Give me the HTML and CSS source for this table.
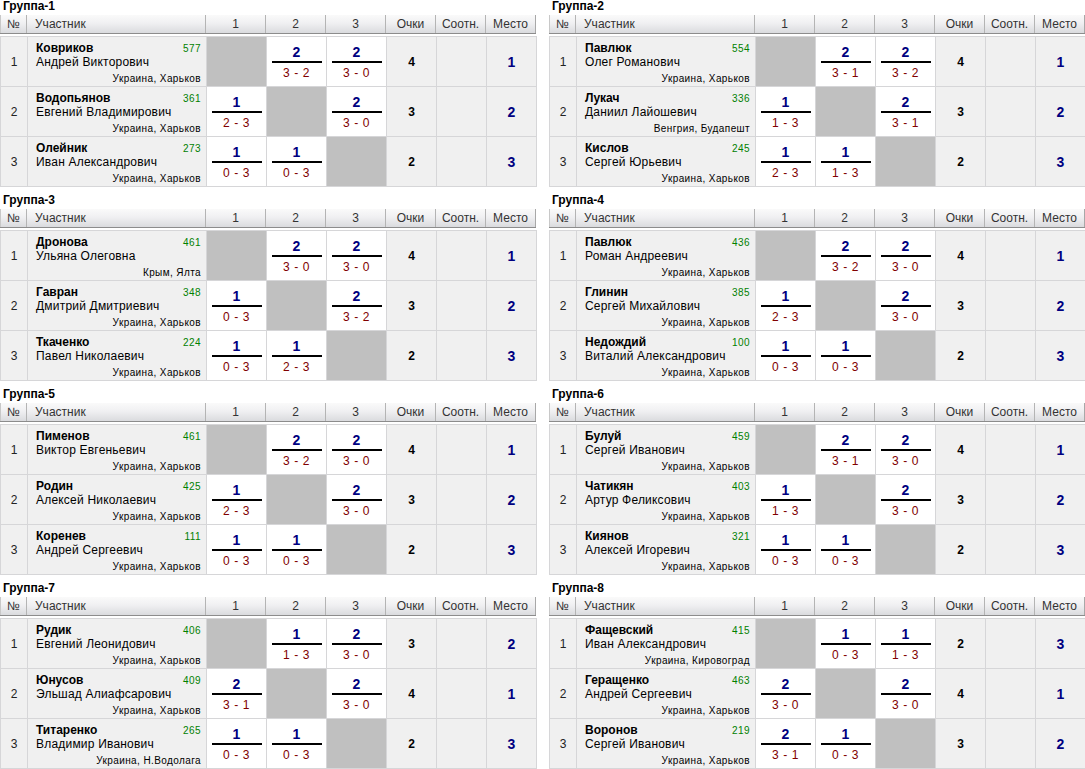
FILE: index.html
```html
<!DOCTYPE html>
<html lang="ru">
<head>
<meta charset="utf-8">
<title>Группы</title>
<link rel="stylesheet" href="styles.css">
</head>
<body>
<div class="page">

<section class="group">
<div class="gtitle">Группа-1</div>
<div class="hd"><div class="c-num">№</div><div class="c-pl">Участник</div><div>1</div><div>2</div><div>3</div><div>Очки</div><div>Соотн.</div><div class="last">Место</div></div>
<table class="bd"><colgroup><col class="w-num"><col class="w-pl"><col class="w-sc"><col class="w-sc"><col class="w-sc"><col class="w-pt"><col class="w-pt"><col class="w-ps"></colgroup>
<tr><td class="num">1</td><td class="pl"><div class="top"><b>Ковриков</b><span class="rt">577</span></div><div class="fn">Андрей Викторович</div><div class="loc">Украина, Харьков</div></td><td class="x"></td><td class="sc"><div class="w">2</div><div class="ln"></div><div class="s">3 - 2</div></td><td class="sc"><div class="w">2</div><div class="ln"></div><div class="s">3 - 0</div></td><td class="pts">4</td><td class="rat"></td><td class="pos">1</td></tr>
<tr><td class="num">2</td><td class="pl"><div class="top"><b>Водопьянов</b><span class="rt">361</span></div><div class="fn">Евгений Владимирович</div><div class="loc">Украина, Харьков</div></td><td class="sc"><div class="w">1</div><div class="ln"></div><div class="s">2 - 3</div></td><td class="x"></td><td class="sc"><div class="w">2</div><div class="ln"></div><div class="s">3 - 0</div></td><td class="pts">3</td><td class="rat"></td><td class="pos">2</td></tr>
<tr><td class="num">3</td><td class="pl"><div class="top"><b>Олейник</b><span class="rt">273</span></div><div class="fn">Иван Александрович</div><div class="loc">Украина, Харьков</div></td><td class="sc"><div class="w">1</div><div class="ln"></div><div class="s">0 - 3</div></td><td class="sc"><div class="w">1</div><div class="ln"></div><div class="s">0 - 3</div></td><td class="x"></td><td class="pts">2</td><td class="rat"></td><td class="pos">3</td></tr>
</table>
</section>

<section class="group">
<div class="gtitle">Группа-2</div>
<div class="hd"><div class="c-num">№</div><div class="c-pl">Участник</div><div>1</div><div>2</div><div>3</div><div>Очки</div><div>Соотн.</div><div class="last">Место</div></div>
<table class="bd"><colgroup><col class="w-num"><col class="w-pl"><col class="w-sc"><col class="w-sc"><col class="w-sc"><col class="w-pt"><col class="w-pt"><col class="w-ps"></colgroup>
<tr><td class="num">1</td><td class="pl"><div class="top"><b>Павлюк</b><span class="rt">554</span></div><div class="fn">Олег Романович</div><div class="loc">Украина, Харьков</div></td><td class="x"></td><td class="sc"><div class="w">2</div><div class="ln"></div><div class="s">3 - 1</div></td><td class="sc"><div class="w">2</div><div class="ln"></div><div class="s">3 - 2</div></td><td class="pts">4</td><td class="rat"></td><td class="pos">1</td></tr>
<tr><td class="num">2</td><td class="pl"><div class="top"><b>Лукач</b><span class="rt">336</span></div><div class="fn">Даниил Лайошевич</div><div class="loc">Венгрия, Будапешт</div></td><td class="sc"><div class="w">1</div><div class="ln"></div><div class="s">1 - 3</div></td><td class="x"></td><td class="sc"><div class="w">2</div><div class="ln"></div><div class="s">3 - 1</div></td><td class="pts">3</td><td class="rat"></td><td class="pos">2</td></tr>
<tr><td class="num">3</td><td class="pl"><div class="top"><b>Кислов</b><span class="rt">245</span></div><div class="fn">Сергей Юрьевич</div><div class="loc">Украина, Харьков</div></td><td class="sc"><div class="w">1</div><div class="ln"></div><div class="s">2 - 3</div></td><td class="sc"><div class="w">1</div><div class="ln"></div><div class="s">1 - 3</div></td><td class="x"></td><td class="pts">2</td><td class="rat"></td><td class="pos">3</td></tr>
</table>
</section>

<section class="group">
<div class="gtitle">Группа-3</div>
<div class="hd"><div class="c-num">№</div><div class="c-pl">Участник</div><div>1</div><div>2</div><div>3</div><div>Очки</div><div>Соотн.</div><div class="last">Место</div></div>
<table class="bd"><colgroup><col class="w-num"><col class="w-pl"><col class="w-sc"><col class="w-sc"><col class="w-sc"><col class="w-pt"><col class="w-pt"><col class="w-ps"></colgroup>
<tr><td class="num">1</td><td class="pl"><div class="top"><b>Дронова</b><span class="rt">461</span></div><div class="fn">Ульяна Олеговна</div><div class="loc">Крым, Ялта</div></td><td class="x"></td><td class="sc"><div class="w">2</div><div class="ln"></div><div class="s">3 - 0</div></td><td class="sc"><div class="w">2</div><div class="ln"></div><div class="s">3 - 0</div></td><td class="pts">4</td><td class="rat"></td><td class="pos">1</td></tr>
<tr><td class="num">2</td><td class="pl"><div class="top"><b>Гавран</b><span class="rt">348</span></div><div class="fn">Дмитрий Дмитриевич</div><div class="loc">Украина, Харьков</div></td><td class="sc"><div class="w">1</div><div class="ln"></div><div class="s">0 - 3</div></td><td class="x"></td><td class="sc"><div class="w">2</div><div class="ln"></div><div class="s">3 - 2</div></td><td class="pts">3</td><td class="rat"></td><td class="pos">2</td></tr>
<tr><td class="num">3</td><td class="pl"><div class="top"><b>Ткаченко</b><span class="rt">224</span></div><div class="fn">Павел Николаевич</div><div class="loc">Украина, Харьков</div></td><td class="sc"><div class="w">1</div><div class="ln"></div><div class="s">0 - 3</div></td><td class="sc"><div class="w">1</div><div class="ln"></div><div class="s">2 - 3</div></td><td class="x"></td><td class="pts">2</td><td class="rat"></td><td class="pos">3</td></tr>
</table>
</section>

<section class="group">
<div class="gtitle">Группа-4</div>
<div class="hd"><div class="c-num">№</div><div class="c-pl">Участник</div><div>1</div><div>2</div><div>3</div><div>Очки</div><div>Соотн.</div><div class="last">Место</div></div>
<table class="bd"><colgroup><col class="w-num"><col class="w-pl"><col class="w-sc"><col class="w-sc"><col class="w-sc"><col class="w-pt"><col class="w-pt"><col class="w-ps"></colgroup>
<tr><td class="num">1</td><td class="pl"><div class="top"><b>Павлюк</b><span class="rt">436</span></div><div class="fn">Роман Андреевич</div><div class="loc">Украина, Харьков</div></td><td class="x"></td><td class="sc"><div class="w">2</div><div class="ln"></div><div class="s">3 - 2</div></td><td class="sc"><div class="w">2</div><div class="ln"></div><div class="s">3 - 0</div></td><td class="pts">4</td><td class="rat"></td><td class="pos">1</td></tr>
<tr><td class="num">2</td><td class="pl"><div class="top"><b>Глинин</b><span class="rt">385</span></div><div class="fn">Сергей Михайлович</div><div class="loc">Украина, Харьков</div></td><td class="sc"><div class="w">1</div><div class="ln"></div><div class="s">2 - 3</div></td><td class="x"></td><td class="sc"><div class="w">2</div><div class="ln"></div><div class="s">3 - 0</div></td><td class="pts">3</td><td class="rat"></td><td class="pos">2</td></tr>
<tr><td class="num">3</td><td class="pl"><div class="top"><b>Недождий</b><span class="rt">100</span></div><div class="fn">Виталий Александрович</div><div class="loc">Украина, Харьков</div></td><td class="sc"><div class="w">1</div><div class="ln"></div><div class="s">0 - 3</div></td><td class="sc"><div class="w">1</div><div class="ln"></div><div class="s">0 - 3</div></td><td class="x"></td><td class="pts">2</td><td class="rat"></td><td class="pos">3</td></tr>
</table>
</section>

<section class="group">
<div class="gtitle">Группа-5</div>
<div class="hd"><div class="c-num">№</div><div class="c-pl">Участник</div><div>1</div><div>2</div><div>3</div><div>Очки</div><div>Соотн.</div><div class="last">Место</div></div>
<table class="bd"><colgroup><col class="w-num"><col class="w-pl"><col class="w-sc"><col class="w-sc"><col class="w-sc"><col class="w-pt"><col class="w-pt"><col class="w-ps"></colgroup>
<tr><td class="num">1</td><td class="pl"><div class="top"><b>Пименов</b><span class="rt">461</span></div><div class="fn">Виктор Евгеньевич</div><div class="loc">Украина, Харьков</div></td><td class="x"></td><td class="sc"><div class="w">2</div><div class="ln"></div><div class="s">3 - 2</div></td><td class="sc"><div class="w">2</div><div class="ln"></div><div class="s">3 - 0</div></td><td class="pts">4</td><td class="rat"></td><td class="pos">1</td></tr>
<tr><td class="num">2</td><td class="pl"><div class="top"><b>Родин</b><span class="rt">425</span></div><div class="fn">Алексей Николаевич</div><div class="loc">Украина, Харьков</div></td><td class="sc"><div class="w">1</div><div class="ln"></div><div class="s">2 - 3</div></td><td class="x"></td><td class="sc"><div class="w">2</div><div class="ln"></div><div class="s">3 - 0</div></td><td class="pts">3</td><td class="rat"></td><td class="pos">2</td></tr>
<tr><td class="num">3</td><td class="pl"><div class="top"><b>Коренев</b><span class="rt">111</span></div><div class="fn">Андрей Сергеевич</div><div class="loc">Украина, Харьков</div></td><td class="sc"><div class="w">1</div><div class="ln"></div><div class="s">0 - 3</div></td><td class="sc"><div class="w">1</div><div class="ln"></div><div class="s">0 - 3</div></td><td class="x"></td><td class="pts">2</td><td class="rat"></td><td class="pos">3</td></tr>
</table>
</section>

<section class="group">
<div class="gtitle">Группа-6</div>
<div class="hd"><div class="c-num">№</div><div class="c-pl">Участник</div><div>1</div><div>2</div><div>3</div><div>Очки</div><div>Соотн.</div><div class="last">Место</div></div>
<table class="bd"><colgroup><col class="w-num"><col class="w-pl"><col class="w-sc"><col class="w-sc"><col class="w-sc"><col class="w-pt"><col class="w-pt"><col class="w-ps"></colgroup>
<tr><td class="num">1</td><td class="pl"><div class="top"><b>Булуй</b><span class="rt">459</span></div><div class="fn">Сергей Иванович</div><div class="loc">Украина, Харьков</div></td><td class="x"></td><td class="sc"><div class="w">2</div><div class="ln"></div><div class="s">3 - 1</div></td><td class="sc"><div class="w">2</div><div class="ln"></div><div class="s">3 - 0</div></td><td class="pts">4</td><td class="rat"></td><td class="pos">1</td></tr>
<tr><td class="num">2</td><td class="pl"><div class="top"><b>Чатикян</b><span class="rt">403</span></div><div class="fn">Артур Феликсович</div><div class="loc">Украина, Харьков</div></td><td class="sc"><div class="w">1</div><div class="ln"></div><div class="s">1 - 3</div></td><td class="x"></td><td class="sc"><div class="w">2</div><div class="ln"></div><div class="s">3 - 0</div></td><td class="pts">3</td><td class="rat"></td><td class="pos">2</td></tr>
<tr><td class="num">3</td><td class="pl"><div class="top"><b>Киянов</b><span class="rt">321</span></div><div class="fn">Алексей Игоревич</div><div class="loc">Украина, Харьков</div></td><td class="sc"><div class="w">1</div><div class="ln"></div><div class="s">0 - 3</div></td><td class="sc"><div class="w">1</div><div class="ln"></div><div class="s">0 - 3</div></td><td class="x"></td><td class="pts">2</td><td class="rat"></td><td class="pos">3</td></tr>
</table>
</section>

<section class="group">
<div class="gtitle">Группа-7</div>
<div class="hd"><div class="c-num">№</div><div class="c-pl">Участник</div><div>1</div><div>2</div><div>3</div><div>Очки</div><div>Соотн.</div><div class="last">Место</div></div>
<table class="bd"><colgroup><col class="w-num"><col class="w-pl"><col class="w-sc"><col class="w-sc"><col class="w-sc"><col class="w-pt"><col class="w-pt"><col class="w-ps"></colgroup>
<tr><td class="num">1</td><td class="pl"><div class="top"><b>Рудик</b><span class="rt">406</span></div><div class="fn">Евгений Леонидович</div><div class="loc">Украина, Харьков</div></td><td class="x"></td><td class="sc"><div class="w">1</div><div class="ln"></div><div class="s">1 - 3</div></td><td class="sc"><div class="w">2</div><div class="ln"></div><div class="s">3 - 0</div></td><td class="pts">3</td><td class="rat"></td><td class="pos">2</td></tr>
<tr><td class="num">2</td><td class="pl"><div class="top"><b>Юнусов</b><span class="rt">409</span></div><div class="fn">Эльшад Алиафсарович</div><div class="loc">Украина, Харьков</div></td><td class="sc"><div class="w">2</div><div class="ln"></div><div class="s">3 - 1</div></td><td class="x"></td><td class="sc"><div class="w">2</div><div class="ln"></div><div class="s">3 - 0</div></td><td class="pts">4</td><td class="rat"></td><td class="pos">1</td></tr>
<tr><td class="num">3</td><td class="pl"><div class="top"><b>Титаренко</b><span class="rt">265</span></div><div class="fn">Владимир Иванович</div><div class="loc">Украина, Н.Водолага</div></td><td class="sc"><div class="w">1</div><div class="ln"></div><div class="s">0 - 3</div></td><td class="sc"><div class="w">1</div><div class="ln"></div><div class="s">0 - 3</div></td><td class="x"></td><td class="pts">2</td><td class="rat"></td><td class="pos">3</td></tr>
</table>
</section>

<section class="group">
<div class="gtitle">Группа-8</div>
<div class="hd"><div class="c-num">№</div><div class="c-pl">Участник</div><div>1</div><div>2</div><div>3</div><div>Очки</div><div>Соотн.</div><div class="last">Место</div></div>
<table class="bd"><colgroup><col class="w-num"><col class="w-pl"><col class="w-sc"><col class="w-sc"><col class="w-sc"><col class="w-pt"><col class="w-pt"><col class="w-ps"></colgroup>
<tr><td class="num">1</td><td class="pl"><div class="top"><b>Фащевский</b><span class="rt">415</span></div><div class="fn">Иван Александрович</div><div class="loc">Украина, Кировоград</div></td><td class="x"></td><td class="sc"><div class="w">1</div><div class="ln"></div><div class="s">0 - 3</div></td><td class="sc"><div class="w">1</div><div class="ln"></div><div class="s">1 - 3</div></td><td class="pts">2</td><td class="rat"></td><td class="pos">3</td></tr>
<tr><td class="num">2</td><td class="pl"><div class="top"><b>Геращенко</b><span class="rt">463</span></div><div class="fn">Андрей Сергеевич</div><div class="loc">Украина, Харьков</div></td><td class="sc"><div class="w">2</div><div class="ln"></div><div class="s">3 - 0</div></td><td class="x"></td><td class="sc"><div class="w">2</div><div class="ln"></div><div class="s">3 - 0</div></td><td class="pts">4</td><td class="rat"></td><td class="pos">1</td></tr>
<tr><td class="num">3</td><td class="pl"><div class="top"><b>Воронов</b><span class="rt">219</span></div><div class="fn">Сергей Иванович</div><div class="loc">Украина, Харьков</div></td><td class="sc"><div class="w">2</div><div class="ln"></div><div class="s">3 - 1</div></td><td class="sc"><div class="w">1</div><div class="ln"></div><div class="s">0 - 3</div></td><td class="x"></td><td class="pts">3</td><td class="rat"></td><td class="pos">2</td></tr>
</table>
</section>

</div>
</body>
</html>
```

FILE: styles.css
```css
* { box-sizing: border-box; }
html, body { background: #fff; }
body {
  margin: 0;
  font-family: "Liberation Sans", Arial, sans-serif;
  font-size: 12px;
  color: #000;
}
.page {
  display: grid;
  grid-template-columns: 536px 536px;
  column-gap: 13px;
}
.group {
  height: 194px;
}
.gtitle {
  font-weight: bold;
  font-size: 12px;
  line-height: 13px;
  height: 15px;
  padding-left: 3px;
}
.hd {
  display: grid;
  grid-template-columns: 27px 179px 60px 60px 60px 50px 50px 50px;
  height: 19px;
  background: linear-gradient(#fafafa, #f0f0f2 45%, #dadbde);
  border-bottom: 1px solid #8c8c8c;
}
.hd > div {
  text-align: center;
  padding-top: 1px;
  line-height: 17px;
  color: #333;
  border-right: 1px solid #b4b4b4;
}
.hd > div.last { border-right: 1px solid #a8a8a8; }
.hd > div.c-num { border-left: 1px solid #c8c8c8; }
.hd > div.c-pl { text-align: left; padding-left: 8px; }
.bd {
  margin-top: 2px;
  width: 536px;
  table-layout: fixed;
  border-collapse: collapse;
  border: 1px solid #a6a6a6;
}
.w-num { width: 27px; }
.w-pl { width: 179px; }
.w-sc { width: 60px; }
.w-pt { width: 50px; }
.w-ps { width: 50px; }
.bd td {
  height: 50px;
  padding: 0;
  border: 1px solid #d6d6d8;
  background: #f0f0f0;
  vertical-align: middle;
  text-align: center;
}
.bd td.num { color: #222; }
.bd td.pl {
  text-align: left;
  vertical-align: top;
  padding: 5px 5px 0 8px;
}
.top {
  display: flex;
  justify-content: space-between;
  align-items: baseline;
  line-height: 13px;
}
.top b { font-size: 12px; }
.rt {
  font-size: 10px;
  color: #008000;
  letter-spacing: 0.4px;
}
.fn {
  line-height: 14px;
  letter-spacing: 0.2px;
}
.loc {
  margin-top: 4px;
  text-align: right;
  font-size: 10px;
  line-height: 12px;
  letter-spacing: 0.4px;
}
.bd td.x { background: #c0c0c0; }
.bd td.sc {
  background: #fff;
  vertical-align: top;
  padding-top: 8px;
}
.w {
  font-weight: bold;
  font-size: 14px;
  line-height: 14px;
  color: #000080;
}
.ln {
  width: 50px;
  height: 2px;
  background: #000;
  margin: 2px auto 3px;
}
.s {
  color: #800000;
  font-size: 12px;
  line-height: 14px;
  letter-spacing: 0.6px;
}
.bd td.pts { font-weight: bold; }
.bd td.pos {
  font-weight: bold;
  font-size: 14px;
  color: #000080;
}
```
